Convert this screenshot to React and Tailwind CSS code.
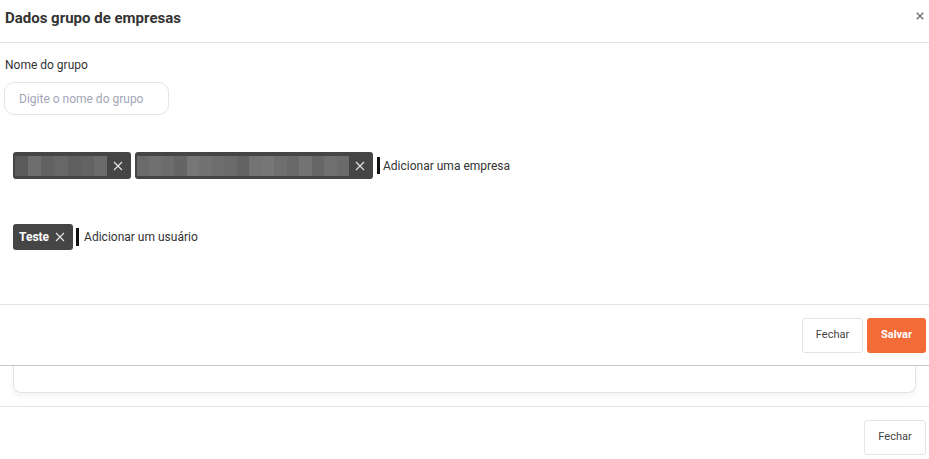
import React from 'react'

const XIcon = ({ className = '' }) => (
  <svg viewBox="0 0 10 10" className={className} fill="none" stroke="currentColor" strokeWidth="1.1">
    <path d="M1 1 L9 9 M9 1 L1 9" />
  </svg>
)

const blur1 = ['#5a5a5a', '#6e6e6e', '#626262', '#676767', '#5f5f5f', '#636363', '#6b6b6b']
const blur2 = ['#6a6a6a', '#707070', '#6c6c6c', '#656565', '#767676', '#727272', '#6e6e6e', '#6b6b6b', '#636363', '#747474', '#777777', '#6f6f6f', '#696969', '#737373', '#666666', '#6f6f6f', '#6b6b6b']

const BlurChip = ({ cells, w }) => (
  <div className="flex h-[27px] items-center rounded-[3px] bg-[#454545] pl-[2px] pr-[8px]">
    <div className="flex h-[20px]" style={{ width: w }}>
      {cells.map((c, i) => (
        <div key={i} className="h-full flex-1" style={{ background: c }} />
      ))}
    </div>
    <XIcon className="ml-[6px] h-[10px] w-[10px] text-[#e6e6e6]" />
  </div>
)

export default function App() {
  return (
    <div className="h-[459px] w-[929px] overflow-hidden bg-white font-['Roboto',sans-serif] text-[#333]">
      <div className="h-[366px] border-b border-[#c8c8c8]">
        <div className="flex h-[43px] items-start justify-between border-b border-[#e2e2e2] pl-[5px] pr-[5px] pt-[7px]">
          <h1 className="text-[15px] font-bold text-[#333]">Dados grupo de empresas</h1>
          <XIcon className="mt-[5px] h-[8px] w-[8px] text-[#777] [stroke-width:2]" />
        </div>
        <div className="h-[261px] pt-[13px]">
          <label className="block pl-[5px] text-[12px] text-[#333]">Nome do grupo</label>
          <div className="ml-[4px] mt-[8px] flex h-[33px] w-[165px] items-center rounded-[10px] border border-[#dfe6ea] pl-[14px] text-[12px] text-[#a3a6b8]">
            Digite o nome do grupo
          </div>
          <div className="ml-[13px] mt-[37px] flex items-center gap-[4px]">
            <BlurChip cells={blur1} w={92} />
            <BlurChip cells={blur2} w={212} />
            <div className="flex items-center">
              <div className="h-[17px] w-[3px] bg-[#111]" />
              <span className="ml-[3px] text-[12px] text-[#333]">Adicionar uma empresa</span>
            </div>
          </div>
          <div className="ml-[13px] mt-[45px] flex items-center gap-[3px]">
            <div className="flex h-[26px] items-center rounded-[3px] bg-[#454545] pl-[6px] pr-[8px] text-white">
              <span className="text-[12px] font-bold">Teste</span>
              <XIcon className="ml-[6px] h-[10px] w-[10px] text-[#e6e6e6]" />
            </div>
            <div className="h-[18px] w-[3px] bg-[#111]" />
            <span className="ml-[2px] text-[12px] text-[#333]">Adicionar um usuário</span>
          </div>
        </div>
        <div className="flex h-[61px] items-center justify-end gap-[4px] border-t border-[#e2e2e2] pr-[3px] pt-[1px]">
          <button className="h-[35px] w-[61px] rounded-[3px] border border-[#e4e4e4] bg-white text-[11px] text-[#444]">Fechar</button>
          <button className="h-[35px] w-[59px] rounded-[3px] bg-[#f36c38] text-[11px] font-bold text-white">Salvar</button>
        </div>
      </div>
      <div className="mx-[13px] h-[27px] rounded-b-[8px] border-x border-b border-[#dbe4e8] shadow-[0_3px_6px_rgba(0,0,0,0.05)]" />
      <div className="mt-[13px] border-t border-[#e2e2e2]" />
      <div className="flex justify-end pr-[3px] pt-[13px]">
        <button className="h-[35px] w-[62px] rounded-[3px] border border-[#e4e4e4] bg-white text-[11px] text-[#444]">Fechar</button>
      </div>
    </div>
  )
}
